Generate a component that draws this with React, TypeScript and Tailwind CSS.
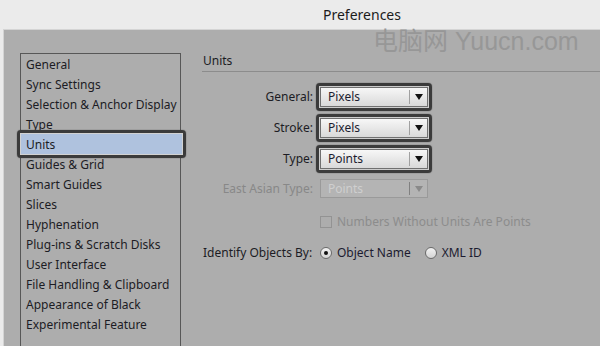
import React from "react";

const font = { fontFamily: '"Noto Sans", "Liberation Sans", sans-serif' };

const categories = [
  "General",
  "Sync Settings",
  "Selection & Anchor Display",
  "Type",
  "Units",
  "Guides & Grid",
  "Smart Guides",
  "Slices",
  "Hyphenation",
  "Plug-ins & Scratch Disks",
  "User Interface",
  "File Handling & Clipboard",
  "Appearance of Black",
  "Experimental Feature",
];

const Arrow = ({ color }: { color: string }) => (
  <svg width="8" height="6" viewBox="0 0 8 6">
    <path d="M0 0 L8 0 L4 6 Z" fill={color} />
  </svg>
);

const Dropdown = ({ value, disabled }: { value: string; disabled?: boolean }) => (
  <div
    className={
      disabled
        ? "flex h-[19px] w-[108px] items-center border border-[#9a9a9a] bg-[#b4b4b4]"
        : "flex h-[20px] w-[108px] items-center border border-[#707070] bg-gradient-to-b from-[#f7f7f7] to-[#d9d9d9]"
    }
  >
    <span
      className={
        disabled
          ? "flex-1 pl-[7px] text-[12px] leading-none text-[#cfcfcf]"
          : "flex-1 pl-[7px] text-[12px] leading-none text-[#1c1c30]"
      }
    >
      {value}
    </span>
    <div className={disabled ? "h-[13px] w-px bg-[#808080]" : "h-[14px] w-px bg-[#a0a0a0]"} />
    <div className="flex w-[17px] justify-center">
      <Arrow color={disabled ? "#8a8a8a" : "#111"} />
    </div>
  </div>
);

const RingDropdown = ({ value }: { value: string }) => (
  <div className="rounded-[4px] border-[3px] border-[#3b3b3b] shadow-[0_0_1px_#222]">
    <div className="border border-[#cdcdcd]">
      <Dropdown value={value} />
    </div>
  </div>
);

const Radio = ({ checked }: { checked?: boolean }) => (
  <div className="flex h-[12px] w-[12px] items-center justify-center rounded-full border border-[#6a6a6a] bg-gradient-to-b from-[#f2f2f2] to-[#d4d4d4]">
    {checked && <div className="h-[4px] w-[4px] rounded-full bg-[#111]" />}
  </div>
);

export default function App() {
  return (
    <div className="relative flex h-[346px] w-[600px] flex-col overflow-hidden bg-[#ebebeb]" style={font}>
      <div className="h-[29px] shrink-0 pl-[323px] pt-[4px] text-[14px] text-[#1b1b1b]">Preferences</div>
      <div className="ml-[3px] flex min-h-0 flex-1 overflow-hidden border-l border-t border-[#d4d4d4] bg-[#adadad]">
        <div className="ml-[16px] mt-[23px] h-[320px] w-[161px] shrink-0 border border-[#575757] pt-[1px]">
          {categories.map((c) =>
            c === "Units" ? (
              <div key={c} className="relative h-[20px]">
                <div className="absolute -left-[4px] -right-[6px] -top-[5px] -bottom-[3px] rounded-[4px] border-[3px] border-[#3b3b3b] shadow-[0_0_1px_#222]">
                  <div className="h-full w-full border border-[#d2d2d2] bg-[#afc2de]" />
                </div>
                <div className="relative pl-[5px] text-[12px] leading-[20px] text-[#1c1c24]">{c}</div>
              </div>
            ) : (
              <div key={c} className="h-[20px] pl-[5px] text-[12px] leading-[20px] text-[#1c1c24]">
                {c}
              </div>
            )
          )}
        </div>

        <div className="ml-[21px] flex flex-1 flex-col">
          <div className="mt-[21px] pl-[1px] text-[12px] leading-[20px] text-[#1c1c24]">Units</div>
          <div className="h-px bg-[#8c8c8c]" />
          <div className="mt-[11px] flex flex-col gap-[3px]">
            {[
              ["General:", "Pixels"],
              ["Stroke:", "Pixels"],
              ["Type:", "Points"],
            ].map(([label, value]) => (
              <div key={label} className="flex items-center">
                <div className="w-[112px] pr-[1px] text-right text-[12px] text-[#1c1c24]">{label}</div>
                <div className="ml-[2px]">
                  <RingDropdown value={value} />
                </div>
              </div>
            ))}
          </div>
          <div className="mt-[6px] flex items-center">
            <div className="w-[112px] pr-[1px] text-right text-[12px] text-[#888888]">East Asian Type:</div>
            <div className="ml-[6px]">
              <Dropdown value="Points" disabled />
            </div>
          </div>
          <div className="mt-[15px] flex items-center pl-[118px]">
            <div className="h-[12px] w-[12px] border border-[#939393]" />
            <span className="ml-[5px] text-[12px] text-[#8c8c8c]">Numbers Without Units Are Points</span>
          </div>
          <div className="mt-[13px] flex items-center">
            <div className="w-[118px] pl-[1px] text-[12px] text-[#1c1c24]">Identify Objects By:</div>
            <Radio checked />
            <span className="ml-[5px] text-[12px] text-[#1c1c30]">Object Name</span>
            <div className="ml-[14px]">
              <Radio />
            </div>
            <span className="ml-[5px] text-[12px] text-[#1c1c30]">XML ID</span>
          </div>
        </div>
      </div>

      <div
        className="absolute left-[373px] top-[26px] text-[25px] leading-[30px] text-[#979797]"
        style={{ fontFamily: '"Liberation Sans", "Noto Sans CJK SC", sans-serif' }}
      >
        电脑网 Yuucn.com
      </div>
    </div>
  );
}
